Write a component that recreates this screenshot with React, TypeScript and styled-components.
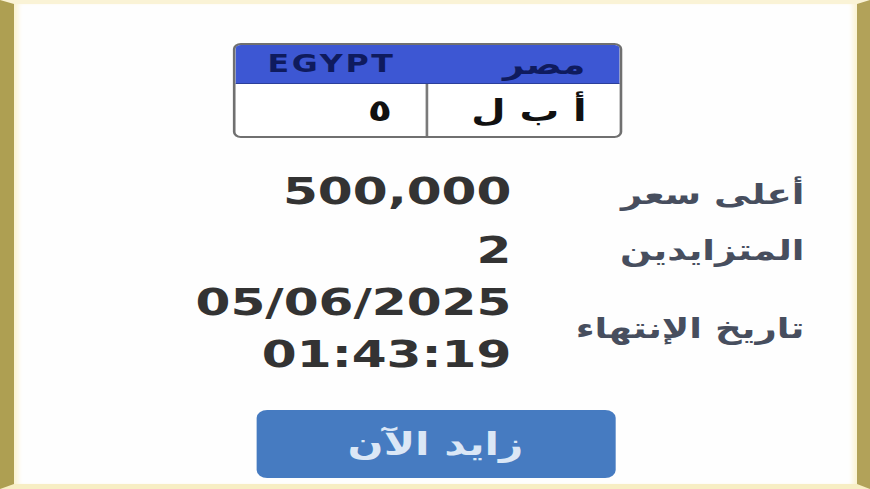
import React from "react";
import styled, { createGlobalStyle } from "styled-components";

const Global = createGlobalStyle`
  html, body { margin: 0; padding: 0; background: #ffffff; }
  body { font-family: "DejaVu Sans", "Noto Sans", sans-serif; }
`;

const Frame = styled.div`
  box-sizing: border-box;
  width: 870px;
  height: 489px;
  overflow: hidden;
  background: #fefefe;
  border-left: 14px solid #ae9f52;
  border-right: 13px solid #b2a259;
  border-top: 4px solid #faf3d6;
  border-bottom: 5px solid #f7eec4;
  box-shadow: inset 7px 0 5px -3px #fbf3d2, inset -7px 0 5px -3px #fbf3d2;
`;

const Stretch = styled.div`
  display: flex;
  flex-direction: column;
  align-items: center;
  padding-top: 39px;
  transform: scaleX(1.32);
  transform-origin: 50% 0;
`;

const Plate = styled.div`
  box-sizing: border-box;
  width: 295px;
  height: 95px;
  margin-right: 12px;
  border: 2px solid #707070;
  border-radius: 6px;
  overflow: hidden;
  display: grid;
  grid-template-rows: 39px 1fr;
  background: #ffffff;
`;

const PlateHeader = styled.div`
  display: grid;
  grid-template-columns: 1fr 1fr;
  background: #3d57d3;
  border-bottom: 1px solid #2c3f9a;
  color: #0f1b5e;
  font-weight: bold;
`;

const HeaderCell = styled.div<{ $align: "center" | "right" }>`
  display: flex;
  align-items: center;
  justify-content: ${(p) => (p.$align === "center" ? "center" : "flex-end")};
  padding-right: ${(p) => (p.$align === "right" ? "26px" : "0")};
  font-size: ${(p) => (p.$align === "center" ? "24px" : "28px")};
  letter-spacing: ${(p) => (p.$align === "center" ? "2px" : "0")};
`;

const PlateBody = styled.div`
  display: grid;
  grid-template-columns: 1fr 1fr;
`;

const BodyCell = styled.div<{ $divider?: boolean }>`
  display: flex;
  align-items: center;
  justify-content: flex-end;
  padding-right: 25px;
  border-right: ${(p) => (p.$divider ? "2px solid #7a7a7a" : "none")};
  color: #111111;
  font-size: 30px;
  font-weight: bold;
`;

const PlateText = styled.span`
  direction: rtl;
`;

const Info = styled.div`
  margin-top: 27px;
  width: 559px;
  display: grid;
  grid-template-columns: 222px 1fr;
  direction: rtl;
`;

const Label = styled.div`
  align-self: center;
  text-align: right;
  color: #474e5e;
  font-size: 28px;
  font-weight: bold;
`;

const Value = styled.div<{ $gap?: number }>`
  direction: ltr;
  text-align: right;
  color: #333333;
  font-weight: bold;
  font-size: 38px;
  line-height: 52px;
  margin-bottom: ${(p) => p.$gap ?? 0}px;
`;

const Lines = styled.div`
  direction: ltr;
  display: flex;
  flex-direction: column;
  align-items: flex-end;
`;

const Button = styled.button`
  margin-top: 30px;
  width: 272px;
  height: 68px;
  border: none;
  border-radius: 8px;
  background: #467bc1;
  color: #dbe7f6;
  font-family: "DejaVu Sans", sans-serif;
  font-weight: bold;
  font-size: 32px;
  direction: rtl;
  cursor: pointer;
`;

export default function App() {
  return (
    <>
      <Global />
      <Frame>
        <Stretch>
          <Plate>
            <PlateHeader>
              <HeaderCell $align="center">EGYPT</HeaderCell>
              <HeaderCell $align="right">مصر</HeaderCell>
            </PlateHeader>
            <PlateBody>
              <BodyCell $divider>
                <PlateText>٥</PlateText>
              </BodyCell>
              <BodyCell>
                <PlateText>أ ب ل</PlateText>
              </BodyCell>
            </PlateBody>
          </Plate>
          <Info>
            <Label>أعلى سعر</Label>
            <Lines>
              <Value $gap={7}>500,000</Value>
            </Lines>
            <Label>المتزايدين</Label>
            <Lines>
              <Value>2</Value>
            </Lines>
            <Label>تاريخ الإنتهاء</Label>
            <Lines>
              <Value>05/06/2025</Value>
              <Value>01:43:19</Value>
            </Lines>
          </Info>
          <Button>زايد الآن</Button>
        </Stretch>
      </Frame>
    </>
  );
}
